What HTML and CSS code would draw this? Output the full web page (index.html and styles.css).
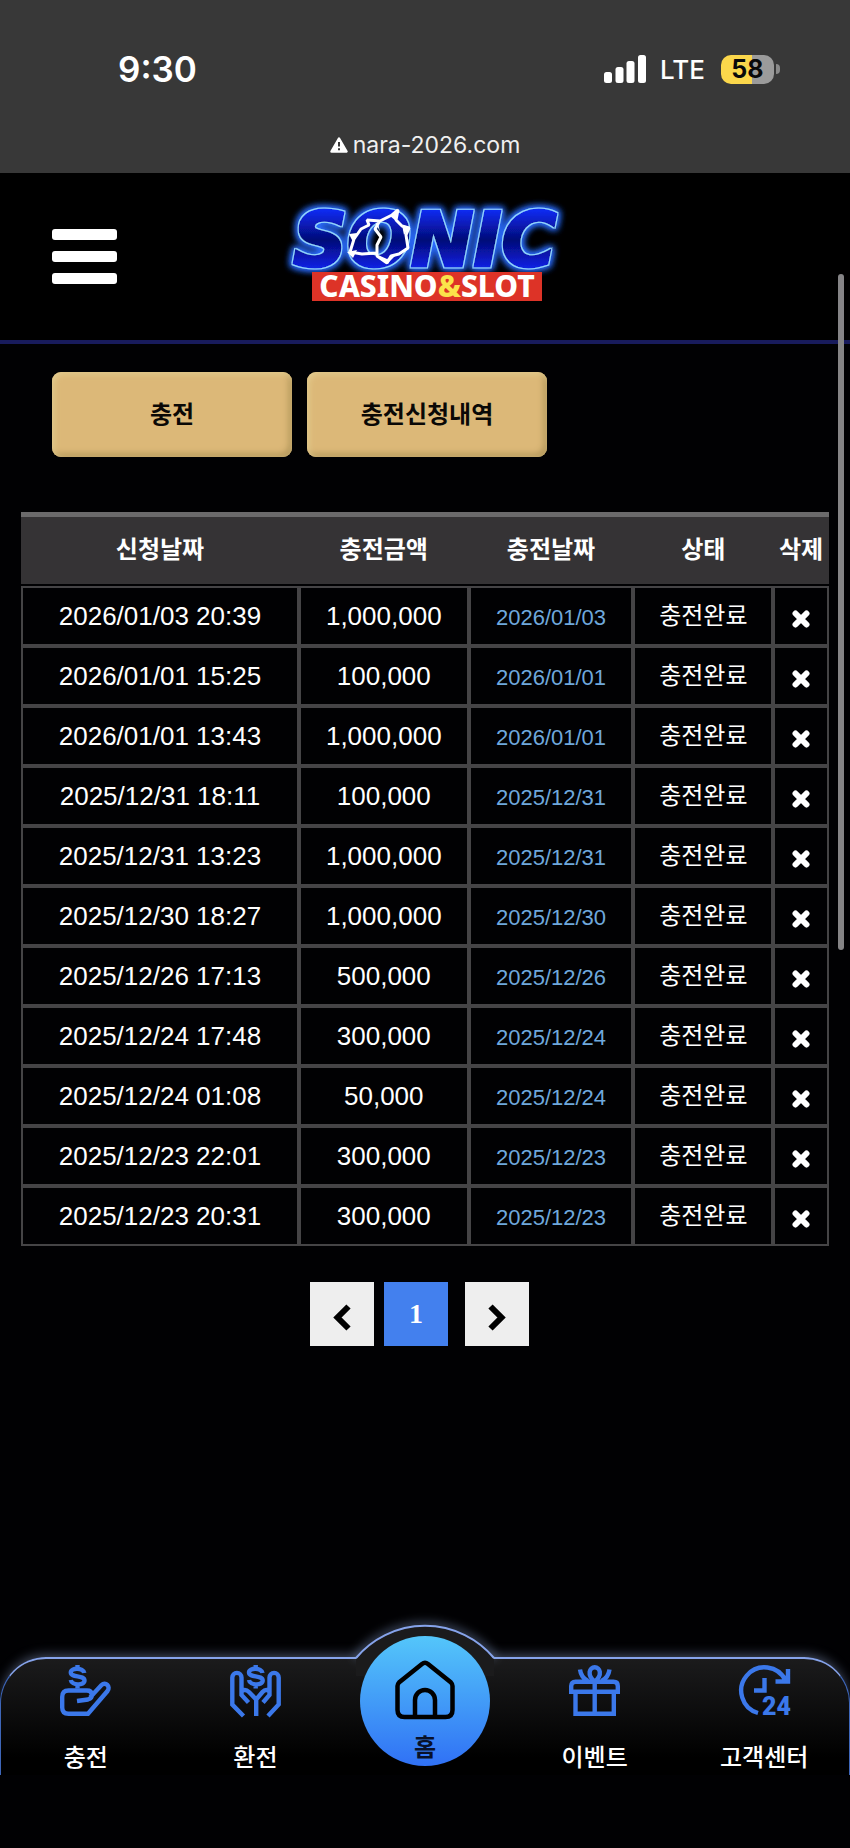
FILE: index.html
```html
<!DOCTYPE html>
<html lang="ko">
<head>
<meta charset="utf-8">
<meta name="viewport" content="width=device-width, initial-scale=1">
<title>충전신청내역</title>
<link rel="stylesheet" href="styles.css">
</head>
<body>
<div class="device-bar">
  <div class="status">
    <span class="clock">9:30</span>
    <div class="signals">
      <svg class="cell" viewBox="0 0 42 28" aria-hidden="true"><rect x="0" y="17" width="8" height="11" rx="2.5"/><rect x="11.5" y="12" width="8" height="16" rx="2.5"/><rect x="22.5" y="6" width="8" height="22" rx="2.5"/><rect x="34" y="0" width="8" height="28" rx="2.5"/></svg>
      <span class="carrier">LTE</span>
      <span class="battery"><span class="battery-level">58</span><span class="battery-tip"></span></span>
    </div>
  </div>
  <div class="address">
    <svg class="warn" viewBox="0 0 18 16" aria-hidden="true"><path d="M9 1.5 16.5 14.5H1.5Z" fill="#fff" stroke="#fff" stroke-width="2.5" stroke-linejoin="round"/><path d="M9 5v4.500M9 11.300v1.900" stroke="#383838" stroke-width="2"/></svg>
    <span>nara-2026.com</span>
  </div>
</div>

<header class="site-head">
  <button class="menu" type="button" aria-label="메뉴"><span></span><span></span><span></span></button>
  <a class="logo" href="#" aria-label="SONIC CASINO&amp;SLOT">
    <svg viewBox="0 0 310 130">
      <defs>
        <linearGradient id="blue" x1="0" y1="0" x2="0" y2="1"><stop offset=".15" stop-color="#0a2cf5"/><stop offset=".5" stop-color="#050a78"/><stop offset=".85" stop-color="#0a24ee"/></linearGradient>
        <filter id="neon" x="-20%" y="-40%" width="140%" height="180%">
          <feMorphology in="SourceAlpha" operator="dilate" radius="1" result="edge"/>
          <feFlood flood-color="#8fd4ff"/><feComposite in2="edge" operator="in" result="outline"/>
          <feMorphology in="SourceAlpha" operator="dilate" radius="2" result="wide"/>
          <feGaussianBlur in="wide" stdDeviation="3.5" result="haze"/>
          <feFlood flood-color="#2b6cff"/><feComposite in2="haze" operator="in" result="glow"/>
          <feMerge><feMergeNode in="glow"/><feMergeNode in="glow"/><feMergeNode in="outline"/><feMergeNode in="SourceGraphic"/></feMerge>
        </filter>
      </defs>
      <text class="wordmark" x="23" y="74" filter="url(#neon)">SONIC</text>
      <path d="M80 60 84 47 91 37 99 33 97 28 110 29 122 23 128 18 126 28 132 34 139 36 136 43 138 56 129 62 121 64 117 71 107 64 107 53 111 45 105 37 109 30M80 60 92 62 106 61" fill="none" stroke="#fff" stroke-width="3" stroke-linejoin="bevel"/>
      <path d="M106 31l4 9-2-9zM108 63l9 4 10-5-10 10zM77 60l10-2-4 8zM132 33l8 2-6 8zM79 42l8-1-4 9zM120 24l9-7-3 12z" fill="#fff"/>
      <rect x="42" y="80" width="230" height="29" fill="#dd3327"/>
      <text class="tagline" x="157" y="105" text-anchor="middle">CASINO<tspan fill="#fbe34a">&amp;</tspan>SLOT</text>
    </svg>
  </a>
</header>

<main class="content">
  <div class="tabs">
    <button class="tab" type="button">충전</button>
    <button class="tab" type="button">충전신청내역</button>
  </div>

  <table class="history">
    <thead>
      <tr><th class="c-req">신청날짜</th><th class="c-amt">충전금액</th><th class="c-date">충전날짜</th><th class="c-state">상태</th><th class="c-del">삭제</th></tr>
    </thead>
    <tbody>
      <tr><td>2026/01/03 20:39</td><td>1,000,000</td><td class="date">2026/01/03</td><td>충전완료</td><td><button class="del" type="button" aria-label="삭제"><svg viewBox="0 0 18 18"><use href="#x"/></svg></button></td></tr>
      <tr><td>2026/01/01 15:25</td><td>100,000</td><td class="date">2026/01/01</td><td>충전완료</td><td><button class="del" type="button" aria-label="삭제"><svg viewBox="0 0 18 18"><use href="#x"/></svg></button></td></tr>
      <tr><td>2026/01/01 13:43</td><td>1,000,000</td><td class="date">2026/01/01</td><td>충전완료</td><td><button class="del" type="button" aria-label="삭제"><svg viewBox="0 0 18 18"><use href="#x"/></svg></button></td></tr>
      <tr><td>2025/12/31 18:11</td><td>100,000</td><td class="date">2025/12/31</td><td>충전완료</td><td><button class="del" type="button" aria-label="삭제"><svg viewBox="0 0 18 18"><use href="#x"/></svg></button></td></tr>
      <tr><td>2025/12/31 13:23</td><td>1,000,000</td><td class="date">2025/12/31</td><td>충전완료</td><td><button class="del" type="button" aria-label="삭제"><svg viewBox="0 0 18 18"><use href="#x"/></svg></button></td></tr>
      <tr><td>2025/12/30 18:27</td><td>1,000,000</td><td class="date">2025/12/30</td><td>충전완료</td><td><button class="del" type="button" aria-label="삭제"><svg viewBox="0 0 18 18"><use href="#x"/></svg></button></td></tr>
      <tr><td>2025/12/26 17:13</td><td>500,000</td><td class="date">2025/12/26</td><td>충전완료</td><td><button class="del" type="button" aria-label="삭제"><svg viewBox="0 0 18 18"><use href="#x"/></svg></button></td></tr>
      <tr><td>2025/12/24 17:48</td><td>300,000</td><td class="date">2025/12/24</td><td>충전완료</td><td><button class="del" type="button" aria-label="삭제"><svg viewBox="0 0 18 18"><use href="#x"/></svg></button></td></tr>
      <tr><td>2025/12/24 01:08</td><td>50,000</td><td class="date">2025/12/24</td><td>충전완료</td><td><button class="del" type="button" aria-label="삭제"><svg viewBox="0 0 18 18"><use href="#x"/></svg></button></td></tr>
      <tr><td>2025/12/23 22:01</td><td>300,000</td><td class="date">2025/12/23</td><td>충전완료</td><td><button class="del" type="button" aria-label="삭제"><svg viewBox="0 0 18 18"><use href="#x"/></svg></button></td></tr>
      <tr><td>2025/12/23 20:31</td><td>300,000</td><td class="date">2025/12/23</td><td>충전완료</td><td><button class="del" type="button" aria-label="삭제"><svg viewBox="0 0 18 18"><use href="#x"/></svg></button></td></tr>
    </tbody>
  </table>

  <div class="pager">
    <button class="page" type="button" aria-label="이전"><svg viewBox="0 0 18 27"><path d="M15.500 2.500 4.500 13.500 15.500 24.500"/></svg></button>
    <button class="page current" type="button">1</button>
    <button class="page next" type="button" aria-label="다음"><svg viewBox="0 0 18 27"><path d="M2.500 2.500 13.500 13.500 2.500 24.500"/></svg></button>
  </div>
</main>

<nav class="dock">
  <svg class="bump" viewBox="0 0 160 60" aria-hidden="true">
    <defs><filter id="soft" x="-20%" y="-50%" width="140%" height="200%"><feGaussianBlur stdDeviation="5"/></filter></defs>
    <path d="M11 42A90 90 0 0 1 149 42" fill="none" stroke="#8fa8d8" stroke-opacity=".4" stroke-width="8" filter="url(#soft)"/>
    <path d="M11 43A90 90 0 0 1 149 43L149 60H11Z" fill="#1b1b1c"/>
    <path d="M11 42A90 90 0 0 1 149 42" fill="none" stroke="#86a3ea" stroke-width="2"/>
  </svg>
  <a class="item" href="#">
    <svg class="icon" viewBox="0 0 51 51"><use href="#dollar"/><path d="M17 36 28 34.500C33.500 33 33 25.500 27 25.500H8.500Q2.200 25.500 2.200 32V42.500Q2.200 48.800 8.500 48.800H28L47.500 26C51 21.500 45.500 16.300 41.500 20L30 32.500"/></svg>
    <span>충전</span>
  </a>
  <a class="item" href="#">
    <svg class="icon" viewBox="0 0 51 51"><use href="#dollar" x="8.200"/><path d="M13.500 51 2.300 39.500V12.500A4.600 4.600 0 0 1 11.500 12.500V30L18.500 37.500M38 51 48.700 39.500V12.500A4.600 4.600 0 0 0 39.500 12.500V30L33 37.500M11.500 26Q15.500 23.500 19 27L26.200 34.500 32.500 27Q35.500 23.500 39.500 26M26.200 34V51"/></svg>
    <span>환전</span>
  </a>
  <a class="item home" href="#">
    <span class="orb">
      <svg class="house" viewBox="0 0 60 60"><path d="M2.500 26Q2.500 24 4 22.500L27 4Q30 1.500 33 4L56 22.500Q57.500 24 57.500 26V50Q57.500 57 50.500 57H9.500Q2.500 57 2.500 50ZM20 57V40A10 10 0 0 1 40 40V57"/></svg>
      <span>홈</span>
    </span>
  </a>
  <a class="item" href="#">
    <svg class="icon" viewBox="0 0 51 51"><path d="M2.200 26.800V21Q2.200 16.800 6.500 16.800H44.500Q48.800 16.800 48.800 21V26.800ZM6.500 27V48.800H44.800V27M25.700 17V49M25.700 16.500C17.500 10 20.500 2.200 25.700 2.200C31 2.200 34 10 25.700 16.500M11 4.500Q12 12.500 19 16M40.500 4.500Q39.500 12.500 32.500 16"/></svg>
    <span>이벤트</span>
  </a>
  <a class="item" href="#">
    <svg class="icon" viewBox="0 0 51 51"><path d="M19 48A23.300 23.300 0 1 1 46.500 15.500M49 4V16.500H36.500M41.500 8.500 48 15.500M25.500 13V25.500H15"/><text class="hours" x="23" y="50">24</text></svg>
    <span>고객센터</span>
  </a>
</nav>
<div class="scroll-thumb"></div>

<svg class="symbols" aria-hidden="true">
  <symbol id="x" viewBox="0 0 18 18"><path d="M3.500 3.500 14.500 14.500M14.500 3.500 3.500 14.500" stroke="#fff" stroke-width="6" stroke-linecap="round"/></symbol>
  <g id="dollar"><path d="M24.300 8C23.500 2.500 10.800 2.300 10.800 7.500C10.800 12.800 24.500 9.800 24.500 15.600C24.500 21 11.500 20.500 10.800 15M17.500 0V4.500M17.500 18.500V23.500"/></g>
</svg>
</body>
</html>
```
FILE: styles.css
```css
* { box-sizing: border-box; }

body {
  margin: 0;
  min-height: 100vh;
  display: flex;
  flex-direction: column;
  position: relative;
  background: #010103;
  color: #fff;
  font-family: "Liberation Sans", "Noto Sans CJK KR", sans-serif;
  font-size: 24px;
}

button {
  font: inherit;
  border: 0;
  padding: 0;
  background: none;
  color: inherit;
}

a { color: inherit; text-decoration: none; }

.symbols { position: absolute; width: 0; height: 0; }

/* device bar */
.device-bar {
  background: #383838;
  height: 173px;
  padding-top: 48px;
  font-family: Inter, sans-serif;
}

.status {
  display: flex;
  justify-content: space-between;
  align-items: center;
  height: 42px;
  padding: 0 70px 0 118px;
}

.clock { font-size: 35px; font-weight: 600; }
.signals { display: flex; align-items: center; }
.cell { width: 42px; height: 28px; fill: #fff; }
.carrier { font-size: 26px; font-weight: 500; margin: 0 16px 0 14px; }

.battery { display: flex; align-items: center; gap: 2px; }

.battery-level {
  width: 53px;
  height: 29px;
  border-radius: 10px;
  background: linear-gradient(90deg, #fbd74b 58%, #9b9b9b 58%);
  color: #0a0a0a;
  font-size: 25px;
  font-weight: 700;
  line-height: 29px;
  text-align: center;
}

.battery-tip {
  width: 4px;
  height: 10px;
  border-radius: 0 4px 4px 0;
  background: #8a8a8a;
}

.address {
  display: flex;
  justify-content: center;
  align-items: center;
  gap: 5px;
  margin-top: 41px;
  font-size: 23px;
  line-height: 28px;
  color: #f0f0f0;
}

.warn { width: 18px; height: 16px; }

/* site header */
.site-head {
  display: grid;
  grid-template-columns: 1fr auto 1fr;
  align-items: center;
  height: 171px;
  padding: 0 52px;
  background: #000;
  border-bottom: 4px solid #181b5c;
}

.menu {
  display: flex;
  flex-direction: column;
  gap: 11px;
  width: 65px;
}

.menu span { height: 11px; border-radius: 3px; background: #fff; }

.logo svg { display: block; width: 310px; height: 130px; }

.wordmark {
  font-family: "DejaVu Sans", sans-serif;
  font-size: 75px;
  font-weight: 700;
  font-style: italic;
  fill: url(#blue);
  stroke: url(#blue);
  stroke-width: 3;
}

.tagline {
  font-family: "Noto Sans", sans-serif;
  font-size: 30px;
  font-weight: 800;
  fill: #fff;
}

/* content */
.content { padding: 28px 21px 0; }

.tabs { display: flex; gap: 15px; padding-left: 31px; }

.tab {
  width: 240px;
  height: 85px;
  padding-bottom: 4px;
  border-radius: 9px;
  background: #dcb878;
  box-shadow: inset 2px 2px 6px #e4cd90, inset -3px -3px 6px #b09458;
  color: #0a0806;
  font-weight: 700;
}

.history {
  width: 100%;
  margin-top: 55px;
  table-layout: fixed;
  border-collapse: separate;
  border-spacing: 0;
  text-align: center;
}

.history th {
  height: 74px;
  padding: 0 0 6px;
  background: #353335;
  border-top: 5px solid #6b6a6b;
  border-bottom: 2px solid #010103;
  font-weight: 700;
}

.history td {
  height: 60px;
  padding: 0;
  border: 2px solid #454446;
  font-size: 26px;
  line-height: 30px;
}

.history td:nth-child(4) { font-size: 24px; }
.history td.date { font-size: 22px; color: #6fa8dc; padding-top: 4px; }

.c-req { width: 34.4%; }
.c-amt { width: 21%; }
.c-date { width: 20.4%; }
.c-state { width: 17.3%; }
.c-del { width: 6.9%; }

.del { display: block; margin: 6px auto 0; }
.del svg { display: block; width: 18px; height: 18px; }

.pager {
  display: flex;
  justify-content: center;
  gap: 10px;
  margin: 36px 0;
  padding-right: 11px;
}

.page {
  display: flex;
  align-items: center;
  justify-content: center;
  width: 64px;
  height: 64px;
  background: #eee;
  font-family: "Liberation Serif", serif;
  font-size: 28px;
  font-weight: 700;
}

.page svg {
  width: 18px;
  height: 27px;
  margin-top: 6px;
  fill: none;
  stroke: #000;
  stroke-width: 6;
}

.page.current { background: #4380ee; }
.page.next { margin-left: 7px; }

/* dock */
.dock {
  position: relative;
  display: grid;
  grid-template-columns: repeat(5, 1fr);
  height: 118px;
  margin: auto 0 73px;
  border: 2px solid #3e66b8;
  border-width: 2px 1px 0;
  border-top-color: #86a3ea;
  border-radius: 46px 46px 0 0;
  background: linear-gradient(#1b1b1c, #000 85%);
  box-shadow: 0 -4px 12px -2px rgba(150, 170, 210, .45);
  clip-path: inset(-50px 0 0 0);
}

.bump {
  position: absolute;
  left: 50%;
  top: -43px;
  width: 160px;
  height: 60px;
  margin-left: -80px;
  overflow: visible;
}

.item {
  display: flex;
  flex-direction: column;
  align-items: center;
  gap: 20px;
  padding-top: 6px;
  font-weight: 500;
  font-family: "Noto Sans CJK KR", sans-serif;
  line-height: 40px;
  white-space: nowrap;
}

.icon {
  width: 51px;
  height: 51px;
  overflow: visible;
  fill: none;
  stroke: #3b78ea;
  stroke-width: 4.4;
}

.hours {
  font-family: Roboto, sans-serif;
  font-size: 25px;
  font-weight: 900;
  fill: #3b78ea;
  stroke: none;
}

.home { position: relative; }

.orb {
  position: absolute;
  top: -23px;
  display: flex;
  flex-direction: column;
  align-items: center;
  width: 130px;
  height: 130px;
  padding-top: 24px;
  border-radius: 50%;
  background: linear-gradient(#54c6fa, #3071f5);
  color: #08112a;
  font-size: 24px;
  font-weight: 700;
  line-height: 52px;
}

.house { flex: none; width: 60px; height: 60px; fill: none; stroke: #000; stroke-width: 4.5; }

.scroll-thumb {
  position: absolute;
  top: 274px;
  right: 6px;
  width: 6px;
  height: 676px;
  border-radius: 3px;
  background: #858486;
}
```
